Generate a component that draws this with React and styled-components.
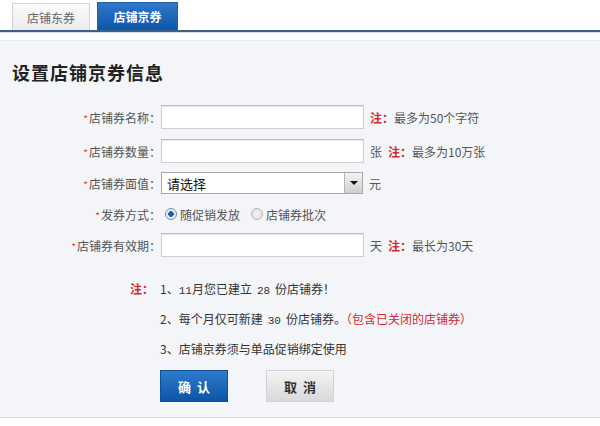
import React from "react";
import styled, { createGlobalStyle } from "styled-components";

const Global = createGlobalStyle`
  html, body { margin: 0; padding: 0; background: #fff; }
  body { font-family: "Noto Sans CJK SC", "Noto Sans", sans-serif; font-size: 12px; color: #333; }
  * { box-sizing: border-box; }
`;

const Page = styled.div`
  width: 600px;
  height: 426px;
  background: #fff;
  overflow: hidden;
`;

const TabBar = styled.div`
  display: flex;
  align-items: flex-end;
  gap: 7px;
  height: 32px;
  padding-left: 12px;
  border-bottom: 2px solid #3e5f88;
  box-shadow: 0 1px 0 #d3e0ee;
`;

const Tab = styled.div`
  display: flex;
  align-items: center;
  justify-content: center;
  width: ${(p) => (p.$active ? 81 : 78)}px;
  height: ${(p) => (p.$active ? 28 : 27)}px;
  font-size: 12px;
  font-weight: ${(p) => (p.$active ? 700 : 400)};
  color: ${(p) => (p.$active ? "#fff" : "#666")};
  background: ${(p) =>
    p.$active
      ? "linear-gradient(#2f78c9, #0d57a8)"
      : "linear-gradient(#fbfbfb, #ececec)"};
  border: 1px solid ${(p) => (p.$active ? "#1d5fa8" : "#d4d4d4")};
  border-bottom: none;
`;

const Panel = styled.div`
  margin-top: 8px;
  height: 378px;
  background: #f4f5f9;
  border-top: 1px solid #e7e9ee;
  border-bottom: 1px solid #d9dadf;
  padding: 19px 0 0 12px;
`;

const Title = styled.h2`
  margin: 0;
  font-size: 18px;
  line-height: 24px;
  font-weight: 700;
  letter-spacing: 1px;
  color: #222;
`;

const Form = styled.div`
  display: flex;
  flex-direction: column;
`;

const Row = styled.div`
  display: flex;
  align-items: center;
  height: 24px;
  margin-top: ${(p) => p.$mt}px;
`;

const Label = styled.div`
  width: 149px;
  text-align: right;
  color: #555;
  font-size: 12px;
  white-space: nowrap;
`;

const Star = styled.span`
  color: #e4393c;
  font-size: 10px;
  margin-right: 1px;
`;

const TextInput = styled.input`
  width: 203px;
  height: 24px;
  border: 1px solid #cfcfcf;
  border-top-color: #bdbdbd;
  box-shadow: inset 0 1px 1px #e6e6e6;
  background: #fff;
  padding: 0 4px;
  font-family: inherit;
  font-size: 12px;
  outline: none;
`;

const Unit = styled.span`
  margin-left: 6px;
  color: #555;
  font-size: 12px;
`;

const Hint = styled.span`
  margin-left: ${(p) => p.$ml ?? 6}px;
  color: #555;
  font-size: 12px;
`;

const HintMark = styled.span`
  color: #d12b2b;
  font-weight: 700;
`;

const SelectBox = styled.div`
  display: flex;
  align-items: center;
  width: 202px;
  height: 22px;
  border: 1px solid #a9a9a9;
  background: #fff;
  padding-left: 5px;
  font-size: 13px;
  color: #111;
`;

const SelectText = styled.span`
  flex: 1;
`;

const SelectArrow = styled.div`
  width: 18px;
  height: 20px;
  border-left: 1px solid #b5b5b5;
  background: linear-gradient(#f2f2f2, #cfcfcf);
  display: flex;
  align-items: center;
  justify-content: center;
  &::after {
    content: "";
    border-left: 4px solid transparent;
    border-right: 4px solid transparent;
    border-top: 4px solid #111;
  }
`;

const RadioGroup = styled.div`
  display: flex;
  align-items: center;
  margin-left: 4px;
`;

const RadioItem = styled.label`
  display: flex;
  align-items: center;
  gap: 3px;
  margin-right: 11px;
  color: #555;
  font-size: 12px;
`;

const RadioDot = styled.span`
  width: 12px;
  height: 12px;
  border-radius: 50%;
  border: 1px solid ${(p) => (p.$on ? "#7d8ea3" : "#b9b9b9")};
  background: ${(p) =>
    p.$on
      ? "radial-gradient(circle, #1e5fae 0 2.6px, #e6ecf4 3px)"
      : "radial-gradient(circle, #f4f4f4, #dcdcdc)"};
`;

const Notes = styled.div`
  display: grid;
  grid-template-columns: 30px auto;
  grid-auto-rows: 30px;
  margin: 17px 0 0 118px;
  font-size: 12px;
  line-height: 30px;
  color: #333;
`;

const NoteMark = styled.span`
  grid-row: 1;
  grid-column: 1;
  color: #d12b2b;
  font-weight: 700;
`;

const NoteLine = styled.div`
  grid-column: 2;
  height: 30px;
  white-space: nowrap;
`;

const Red = styled.span`
  color: #d12b2b;
`;

const Num = styled.span`
  font-family: "Liberation Mono", "DejaVu Sans Mono", monospace;
  font-size: 11px;
  line-height: 1;
  margin: 0 ${(p) => p.$m ?? 0}px;
`;

const Buttons = styled.div`
  display: flex;
  gap: 38px;
  margin: 6px 0 0 148px;
`;

const Button = styled.button`
  width: 68px;
  height: 32px;
  border: 1px solid ${(p) => (p.$primary ? "#0d4f99" : "#d2d2d2")};
  background: ${(p) =>
    p.$primary ? "linear-gradient(#2f7bcb, #0c55a6)" : "linear-gradient(#f3f3f3, #d9d9d9)"};
  color: ${(p) => (p.$primary ? "#fff" : "#333")};
  font-family: inherit;
  font-size: 13px;
  font-weight: 700;
  letter-spacing: 6px;
  padding: 0 0 0 6px;
  cursor: pointer;
`;

export default function App() {
  return (
    <Page>
      <Global />
      <TabBar>
        <Tab>店铺东券</Tab>
        <Tab $active>店铺京券</Tab>
      </TabBar>
      <Panel>
        <Title>设置店铺京券信息</Title>
        <Form>
          <Row $mt={21}>
            <Label><Star>*</Star>店铺券名称：</Label>
            <TextInput />
            <Hint $ml={6}><HintMark>注：</HintMark>最多为50个字符</Hint>
          </Row>
          <Row $mt={10}>
            <Label><Star>*</Star>店铺券数量：</Label>
            <TextInput />
            <Unit>张</Unit>
            <Hint $ml={6}><HintMark>注：</HintMark>最多为10万张</Hint>
          </Row>
          <Row $mt={8}>
            <Label><Star>*</Star>店铺券面值：</Label>
            <SelectBox>
              <SelectText>请选择</SelectText>
              <SelectArrow />
            </SelectBox>
            <Unit>元</Unit>
          </Row>
          <Row $mt={7}>
            <Label><Star>*</Star>发券方式：</Label>
            <RadioGroup>
              <RadioItem><RadioDot $on />随促销发放</RadioItem>
              <RadioItem><RadioDot />店铺券批次</RadioItem>
            </RadioGroup>
          </Row>
          <Row $mt={7}>
            <Label><Star>*</Star>店铺券有效期：</Label>
            <TextInput />
            <Unit>天</Unit>
            <Hint $ml={6}><HintMark>注：</HintMark>最长为30天</Hint>
          </Row>
        </Form>
        <Notes>
          <NoteMark>注：</NoteMark>
          <NoteLine>1、<Num>11</Num>月您已建立<Num $m={5}>28</Num>份店铺券！</NoteLine>
          <NoteLine>2、每个月仅可新建<Num $m={5}>30</Num>份店铺券。<Red>（包含已关闭的店铺券）</Red></NoteLine>
          <NoteLine>3、店铺京券须与单品促销绑定使用</NoteLine>
        </Notes>
        <Buttons>
          <Button $primary>确认</Button>
          <Button>取消</Button>
        </Buttons>
      </Panel>
    </Page>
  );
}
